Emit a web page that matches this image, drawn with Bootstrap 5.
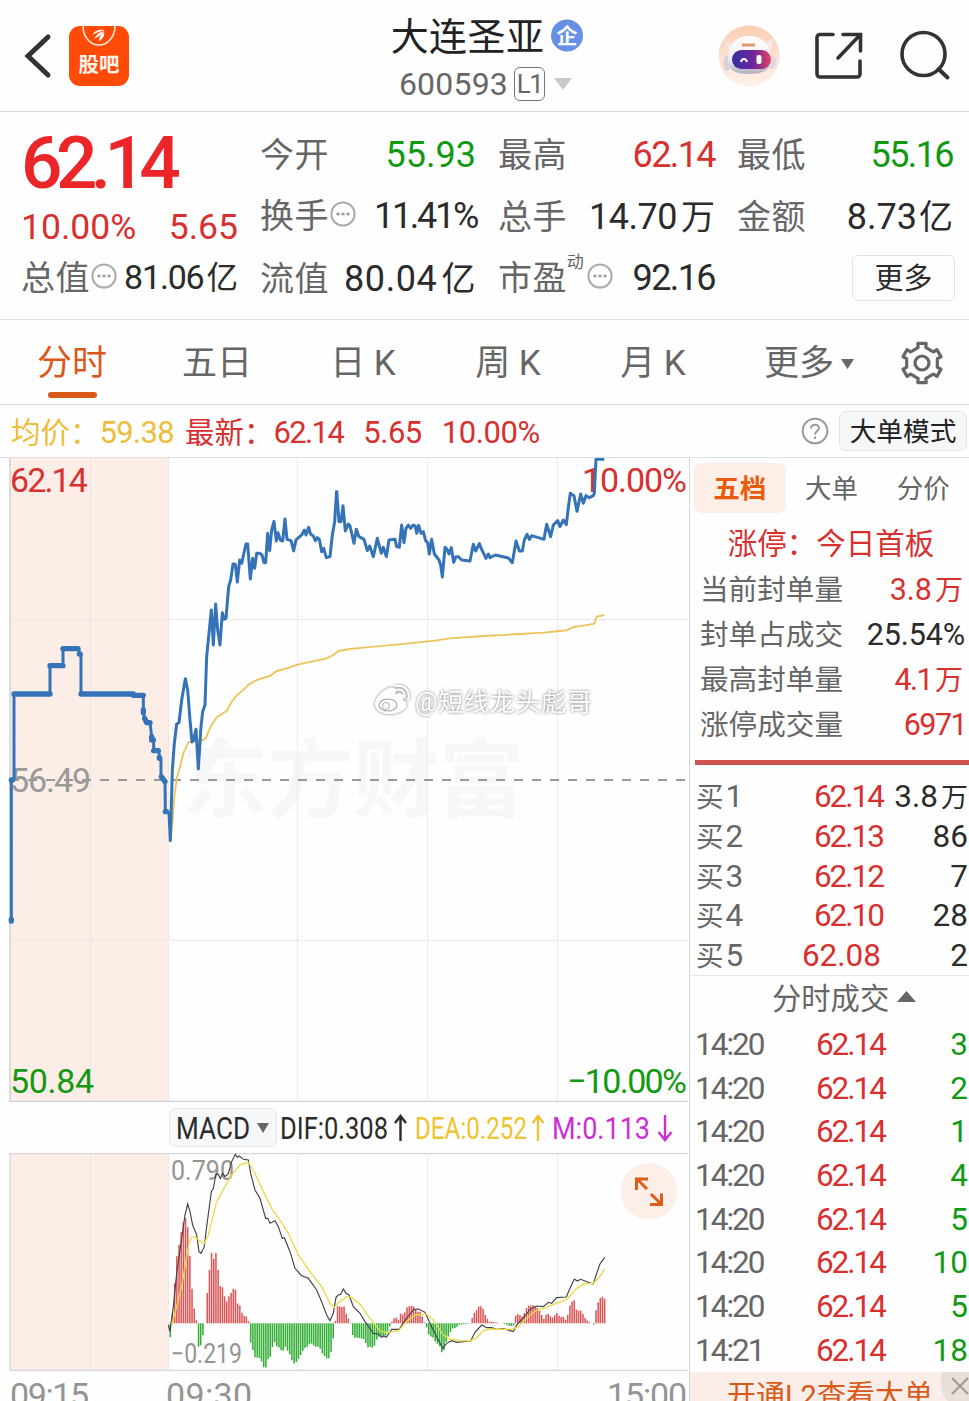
<!DOCTYPE html>
<html lang="zh-CN">
<head>
<meta charset="utf-8">
<meta name="viewport" content="width=device-width, initial-scale=1">
<title>大连圣亚 600593</title>
<link href="https://cdn.jsdelivr.net/npm/bootstrap@5.3.0/dist/css/bootstrap.min.css" rel="stylesheet">
<style>
:root{--up:#d7302f;--down:#119911;--ink:#2b2b2b;--dim:#666;--brand:#d9591a;--line:#dfe1e3}
body{font-family:Roboto,"Noto Sans CJK SC",sans-serif;color:var(--ink);background:#fefefe;width:969px;height:1401px;overflow:hidden;line-height:1}
.up{color:var(--up)}.down{color:var(--down)}.dim{color:var(--dim)}
svg{display:block;flex:none}
svg text{font-family:Roboto,"Noto Sans CJK SC",sans-serif}
.topbar{height:112px;border-bottom:1px solid #d9dbdd}
.side-l{width:365px;padding:1px 0 0 24px}
.side-r{width:365px;padding:1px 18px 0 0}
.name-col{padding-left:5px}
.stock-name{font-size:38px;line-height:44px;letter-spacing:.4px;font-weight:400;color:#222;margin-top:15px}
.stock-code{font-size:32px;line-height:36px;margin-top:7px;padding-right:2px}
.stock-code .num{letter-spacing:.2px}
.lvl{width:31px;height:34px;border:1.5px solid #777;border-radius:6px;font-size:26px;line-height:32px;letter-spacing:-1.5px}
.quote{height:208px;border-bottom:1px solid var(--line);padding:11px 0 0 21px}
.q-grid{display:grid;grid-template-columns:217px 216px 217px 216px;column-gap:22px}
.q-grid>div{height:62px;line-height:64px;font-size:36px;white-space:nowrap}
.q-grid .lb{font-size:34px;color:var(--dim);letter-spacing:.4px}
.q-grid .lb svg{transform:translate(1px,-2px)}
.q-main{grid-row:span 2;height:124px!important}
.q-price{font-size:73px;font-weight:500;line-height:81px;letter-spacing:-6.6px;color:#eb2528}
.q-sub{line-height:46px;font-size:35.5px}
.tn{letter-spacing:-1.6px}
.wan{font-size:34px;margin-left:4px}
.more-btn{width:103px;height:46px;border:1.5px solid #e2e2e2;border-radius:6px;font-size:29px;line-height:46px;margin-right:-2px}
.tabs-row{height:85px;border-bottom:1px solid #d9dbdd;font-size:35px;color:var(--dim);display:grid;grid-template-columns:144px 146px 146px 144px 146px 146px 97px;line-height:88px}
.tabs-row .on{color:var(--brand);position:relative}
.tabs-row .on::after{content:"";position:absolute;left:48px;width:49px;height:6px;top:72px;border-radius:3px;background:var(--brand)}
.info-row{height:53px;border-bottom:1px solid var(--line);font-size:31px;line-height:54px;padding:0 2px 0 11px;white-space:nowrap}
.info-row>.t{padding-top:4px}
.mode-btn{width:128px;height:40px;background:#f6f7f9;border:1.5px solid #e2e4e7;border-radius:7px;font-size:26.7px;line-height:40px;color:#222}
.chart-col{width:689px}
.side-col{width:280px;border-left:1px solid #d4d7da}
.macd-row{height:51px;padding-left:169px;white-space:nowrap}
.macd-btn{width:108px;height:39px;background:#f6f7f9;border:1.5px solid #e4e6e9;border-radius:7px}
.axis{height:31px;padding-left:10px;overflow:hidden}
.book-tabs{height:55px;padding:5px 0 0 4px;font-size:26.5px;color:var(--dim)}
.book-tabs div{width:92px;height:50px;line-height:52px;text-align:center;border-radius:8px}
.book-tabs .on{background:#fdeee7;color:#ea5a0c;font-weight:700}
.limit{height:53px;line-height:62px;font-size:29.5px;text-align:center;padding-left:3px}
.stat{height:45px;line-height:48px;font-size:30.5px;padding:0 6px 0 10px}
.stat .k{font-size:28.6px;color:var(--dim)}
.stat .wan{font-size:28px;margin-left:3px}
.bar{height:5px;background:#cf5251;margin:14px 0 11px 5px}
.bid,.deal{display:grid;grid-template-columns:84px 101px 1fr;font-size:31.5px;padding:0 1px 0 6px}
.bid{height:39.8px;line-height:42px}
.bid>span:nth-child(2),.deal>span:nth-child(2),.bid>span:nth-child(3),.deal>span:nth-child(3){text-align:right}
.bid .wan{font-size:27px;margin-left:3px}
.cn{font-size:27.5px;margin-right:2px}
.bid .tn,.deal .tn{letter-spacing:-2px;margin-right:-2px}
.deal{height:43.7px;line-height:43.7px;grid-template-columns:84px 104px 1fr;padding-left:5px}
.deal-h{height:48px;border-top:1px solid #e6e8ea;font-size:29.3px;line-height:46px;padding-left:82px}
.promo{height:31px;background:#fbeee8;color:var(--brand);font-size:29px;line-height:48px;padding-left:37px;overflow:hidden;white-space:nowrap;position:relative}
.promo svg{position:absolute;right:0;top:0}
</style>
</head>
<body>
<header class="topbar d-flex justify-content-between">
  <div class="side-l d-flex align-items-center">
    <svg width="28" height="48" viewBox="0 0 28 48"><path d="M24 5 4 24 24 43" fill="none" stroke="#333" stroke-width="5" stroke-linecap="round"/></svg>
    <svg width="60" height="60" viewBox="0 0 60 60" class="me-auto" style="margin-left:17px"><rect width="60" height="60" rx="11" fill="#ff4a08"/><path d="M14 0a16 19 0 0 0 32 0" fill="none" stroke="#ffe4d8" stroke-width="1.600"/><path d="M23 9c3-5 8-6 13-5-5 1-9 3-13 5Zm2 4c3-5 6-7 10-8-3 4-6 6-10 8Zm5 2c0-4 2-7 5-9 1 3-1 7-5 9Z" fill="#fff"/><text x="9.500" y="46" font-size="20.500" font-weight="700" fill="#fff4ee" textLength="41">股吧</text></svg>
  </div>
  <div class="text-center name-col">
    <div class="d-flex align-items-center justify-content-center stock-name"><span>大连圣亚</span>
      <svg width="33" height="33" viewBox="0 0 33 33" style="margin:-3px 0 0 6px"><circle cx="17" cy="16.500" r="16" fill="#6690e6"/><text x="6.500" y="24" font-size="21" font-weight="700" fill="#fff">企</text></svg></div>
    <div class="d-flex align-items-center justify-content-center stock-code dim"><span class="num">600593</span><span class="lvl" style="margin-left:6px">L1</span>
      <svg width="20" height="12" viewBox="0 0 20 12" class="ms-2"><path d="M1 0h18L10 12Z" fill="#c9c9c9"/></svg></div>
  </div>
  <div class="side-r d-flex align-items-center justify-content-end">
    <svg width="62" height="62" viewBox="0 0 62 62"><defs><linearGradient id="bg" x2="0" y2="1"><stop stop-color="#fccdb3"/><stop offset="1" stop-color="#fff2eb"/></linearGradient><linearGradient id="visor"><stop stop-color="#3630a0"/><stop offset=".55" stop-color="#6d259b"/><stop offset="1" stop-color="#e64261"/></linearGradient><linearGradient id="shell" x2="0" y2="1"><stop stop-color="#fff"/><stop offset=".6" stop-color="#f1eef2"/><stop offset="1" stop-color="#aeb0c0"/></linearGradient></defs><circle cx="31" cy="31" r="30.500" fill="url(#bg)"/><path d="m6 16 9 4-1 8Zm50-3-10 6 5 8Z" fill="#eeeaf0"/><ellipse cx="9" cy="38" rx="3.500" ry="8" fill="#d5d2dc"/><ellipse cx="54" cy="37" rx="4" ry="7" fill="#ddd9e2"/><path d="M10 36c0-17 8-25 21-25s22 8 22 25c0 9-8 13-22 13S10 45 10 36Z" fill="url(#shell)"/><path d="M24 20h13" stroke="#dd9a67" stroke-width="3"/><rect x="14" y="25" width="39" height="19" rx="9.500" fill="url(#visor)"/><path d="M23 37c1-4 5-4 6 0" fill="none" stroke="#fff" stroke-width="2"/><rect x="38.500" y="30" width="5" height="9" rx="2" fill="#fff"/></svg>
    <svg width="50" height="50" viewBox="0 0 50 50" style="margin-left:34px"><path d="M19 3.500H6a3 3 0 0 0-3 3V43a3 3 0 0 0 3 3h37a3 3 0 0 0 3-3V30M29 3.500h17.500V20M45.500 4.500 24 27" fill="none" stroke="#333" stroke-width="3.600" stroke-linecap="round"/></svg>
    <svg width="52" height="52" viewBox="0 0 52 52" style="margin-left:35px"><circle cx="24.500" cy="24" r="21.500" fill="none" stroke="#333" stroke-width="3.600"/><path d="m39.500 39 9 8.500" stroke="#333" stroke-width="4" stroke-linecap="round"/></svg>
  </div>
</header>

<section class="quote">
  <div class="q-grid">
    <div class="q-main"><div class="q-price">62.14</div><div class="d-flex justify-content-between up q-sub"><span>10.00%</span><span>5.65</span></div></div>
    <div class="d-flex justify-content-between"><span class="lb">今开</span><span class="down">55.93</span></div>
    <div class="d-flex justify-content-between"><span class="lb">最高</span><span class="up tn">62.14</span></div>
    <div class="d-flex justify-content-between"><span class="lb">最低</span><span class="down tn">55.16</span></div>
    <div class="d-flex align-items-center justify-content-between"><span class="lb d-flex align-items-center">换手<svg width="26" height="26" viewBox="0 0 26 26"><circle cx="13" cy="13" r="11.600" fill="none" stroke="#aaa" stroke-width="2"/><path d="M6.500 13h3m2 0h3m2 0h3" stroke="#999" stroke-width="2.500"/></svg></span><span style="letter-spacing:-2.300px;margin-right:-1px">11.41%</span></div>
    <div class="d-flex justify-content-between"><span class="lb">总手</span><span><span style="letter-spacing:-.5px">14.70</span><span class="wan">万</span></span></div>
    <div class="d-flex justify-content-between"><span class="lb">金额</span><span>8.73<span class="wan" style="margin-left:2px">亿</span></span></div>
    <div class="d-flex align-items-center justify-content-between"><span class="lb d-flex align-items-center">总值<svg width="26" height="26" viewBox="0 0 26 26"><circle cx="13" cy="13" r="11.600" fill="none" stroke="#aaa" stroke-width="2"/><path d="M6.500 13h3m2 0h3m2 0h3" stroke="#999" stroke-width="2.500"/></svg></span><span style="font-size:34px"><span style="letter-spacing:-1.200px">81.06</span><span style="font-size:31.500px;margin-left:3px">亿</span></span></div>
    <div class="d-flex justify-content-between"><span class="lb">流值</span><span style="letter-spacing:.6px">80.04<span class="wan">亿</span></span></div>
    <div class="d-flex align-items-center justify-content-between"><span class="lb d-flex align-items-center">市盈<small style="font-size:17px;line-height:32px;align-self:start">动</small><svg width="26" height="26" viewBox="0 0 26 26" style="margin-left:2px"><circle cx="13" cy="13" r="11.600" fill="none" stroke="#aaa" stroke-width="2"/><path d="M6.500 13h3m2 0h3m2 0h3" stroke="#999" stroke-width="2.500"/></svg></span><span class="tn">92.16</span></div>
    <div class="d-flex align-items-center justify-content-end"><span class="more-btn text-center">更多</span></div>
  </div>
</section>

<nav class="tabs-row text-center">
  <div class="on">分时</div><div>五日</div><div>日 K</div><div>周 K</div><div>月 K</div>
  <div class="d-flex align-items-center justify-content-end" style="padding-right:17px">更多<svg width="14" height="11" viewBox="0 0 14 11" style="margin-left:7px"><path d="M0 0h13L6.500 10Z" fill="#666"/></svg></div>
  <div class="d-flex align-items-center justify-content-end" style="padding-right:24px"><svg width="46" height="46" viewBox="-23 -23 46 46" style="margin-top:-2px"><path id="gear" fill="none" stroke="#666" stroke-width="3.200" stroke-linejoin="round"/><circle r="7" fill="none" stroke="#666" stroke-width="3.200"/></svg></div>
</nav>

<div class="info-row d-flex align-items-center">
  <span class="t" style="color:#edbd3c"><span style="font-size:29.500px">均价：</span><span style="letter-spacing:-.7px">59.38</span></span>
  <span class="up t" style="margin-left:11px"><span style="font-size:29.500px">最新：</span><span class="tn">62.14</span></span>
  <span class="up t" style="margin-left:20px;letter-spacing:-.5px">5.65</span><span class="up t" style="margin-left:20px;letter-spacing:-.4px">10.00%</span>
  <svg class="ms-auto" style="margin-right:10px" width="28" height="28" viewBox="0 0 28 28"><circle cx="14" cy="14" r="12.300" fill="none" stroke="#999" stroke-width="2"/><path d="M10 11.500c0-5 8-5 8-.5 0 3-4 3-4 6.500m0 2v2.500" fill="none" stroke="#999" stroke-width="2"/></svg>
  <span class="mode-btn text-center">大单模式</span>
</div>

<main class="d-flex">
  <div class="chart-col">
    <svg width="689" height="644" viewBox="0 458 689 644">
      <rect x="10" y="458" width="158.500" height="644" fill="#fdede7"/>
      <text y="811" x="182" font-size="86" font-weight="700" fill="#f7f7f7" textLength="342">东方财富</text>
      <path d="M90.500 458v644M168.500 458v644M297.500 458v644M427.500 458v644M557.500 458v644M10 619.500h678M10 940.500h678" stroke="#dcdcdc" stroke-dasharray="1 1"/>
      <path d="M10 458v644M10 1101.500h678" stroke="#cfd4d8" stroke-width="1.500" fill="none"/>
      <path d="M10 780h678" stroke="#999" stroke-width="1.800" stroke-dasharray="9 9"/>
      <g font-size="34">
        <text x="10" y="492" fill="#d7302f" letter-spacing="-1.900">62.14</text>
        <text x="10" y="792" fill="#999" textLength="81">56.49</text>
        <text x="10" y="1093" fill="#119911" textLength="84">50.84</text>
        <text x="582" y="492" fill="#d7302f" textLength="105">10.00%</text>
        <text x="567" y="1093" fill="#119911" textLength="120">−10.00%</text>
      </g>
      <g transform="translate(0 450) scale(.33333)" fill="none" stroke-linejoin="round">
        <path stroke="#ecc45c" stroke-width="5.500" d="M511 1172 518 1110 522 1050 530 985 540 950 550 910 565 877 576 873 610 870 618 862 632 830 650 802 665 793 680 783 695 755 710 737 727 722 750 701 775 688 810 678 830 663 860 655 895 643 935 635 980 625 1000 615 1015 603 1050 597 1090 593 1190 584 1305 572 1350 565 1450 558 1560 552 1630 548 1680 543 1700 541 1720 531 1750 527 1783 521 1790 500 1813 495"/>
        <path stroke="#3573b9" stroke-width="9" d="M34 1413V990H42V732H150V647H189V596H236L238 612H243V732H400L430 737V780L433 805 440 818H450L455 860 461 870V902H475L480 923H483V980L495 995 496 1085 507 1088 511 1172 517 960 523 880 530 822 537 818 545 750 556 686 563 720 570 810 576 876 580 872 588 838 595 957 603 830 608 785 615 765 620 620 634 480 640 585 647 462 653 540 660 585 667 488 672 508 678 505 686 410 692 390 699 342 706 343 712 396 719 330 725 340 738 282 743 282 751 387 758 325 764 355 770 310 780 310 786 315 792 338 797 338 803 250 809 302 815 240 822 214 829 273 834 248 841 270 848 273 855 207 861 268 873 272 881 303 888 270 905 255 913 240 918 255 926 232 932 253 940 258 946 272 952 263 958 268 965 305 971 295 979 323 990 320 997 255 1004 215 1010 122"/>
        <path stroke="#3573b9" stroke-width="16" stroke-linecap="round" d="M34 1413V1408M34 990H37M42 732H150M150 647H189M189 596H234M238 612H240M243 732H400M400 736H430M430 780V788M434 805 440 818H450M455 860V870H460M461 902H475M478 922V925M484 980 495 995M496 1085H500"/>
        <path stroke="#3573b9" stroke-width="9" transform="translate(1020)" d="M-10 122-3 215 3 215 9 167 16 243 25 222 30 228 42 280 49 238 57 260 72 268 82 302 89 288 100 320 112 265 124 310 130 292 139 320 147 270 165 268 170 290 178 292 185 225 192 278 198 235 205 225 212 235 220 225 226 228 230 250 236 226 243 250 250 245 257 272 263 278 268 312 275 268 283 312 297 330 302 345 307 381 315 292 321 298 327 312 334 293 341 337 348 320 355 320 365 330 390 333 400 283 407 303 418 281 425 298 438 325 445 312 450 323 466 315 505 324 517 338 528 273 538 303 547 303 553 270 561 253 568 268 575 257 612 268 620 223 632 260 640 225 653 212 660 230 670 210 679 224 686 165 691 130 702 137 711 184 722 132 730 160 738 137 748 143 760 137 763 130 768 28 793 28"/>
      </g>
      <g style="filter:drop-shadow(0 0 1.500px #777)" fill="#fff">
        <text x="415" y="711" font-size="25" textLength="177">@短线龙头彪哥</text>
        <path d="M375 704c0-8 13-19 19-16 3 1 2 5 1 6 8-2 10 1 8 6 5 2 5 8-1 11-10 6-27 3-27-7Z"/>
        <path d="M395 690c7-2 11 3 9 8M395 686c10-2 16 6 13 14" fill="none" stroke="#fff" stroke-width="2"/>
      </g>
      <ellipse cx="388" cy="705" rx="9" ry="6" fill="none" stroke="#aaa" stroke-width="1.200"/><circle cx="386" cy="706" r="3.500" fill="none" stroke="#aaa"/>
    </svg>
    <div class="macd-row d-flex align-items-center">
      <span class="macd-btn d-flex align-items-center"><svg width="105" height="37" viewBox="0 0 105 37"><text x="6" y="30" font-size="32" fill="#2b2b2b" textLength="74" lengthAdjust="spacingAndGlyphs">MACD</text><path d="M87 14h12l-6 10Z" fill="#666"/></svg></span>
      <svg width="410" height="50" viewBox="277 1103 410 50" font-size="32"><text x="280" y="1139" fill="#2b2b2b" textLength="108" lengthAdjust="spacingAndGlyphs">DIF:0.308</text><text x="415" y="1139" fill="#edc433" textLength="112" lengthAdjust="spacingAndGlyphs">DEA:0.252</text><text x="552" y="1139" fill="#cb30d3" textLength="98" lengthAdjust="spacingAndGlyphs">M:0.113</text><g fill="none" stroke-width="2.400"><path stroke="#2b2b2b" d="M400.500 1141v-25m-5.500 7 5.500-7 5.500 7"/><path stroke="#edc433" d="M538 1141v-25m-5.500 7 5.500-7 5.500 7"/><path stroke="#cb30d3" d="M665 1115v25m-6.500-8 6.500 8 6.500-8"/></g></svg>
    </div>
    <svg width="689" height="218" viewBox="0 1153 689 218">
      <rect x="10" y="1153" width="158.500" height="217" fill="#fdede7"/>
      <path d="M90.500 1153v217M168.500 1153v217M297.500 1153v217M427.500 1153v217M557.500 1153v217" stroke="#dcdcdc" stroke-dasharray="1 1"/>
      <path d="M688 1153.500H10V1370.500H688" fill="none" stroke="#d4d8dc" stroke-width="1.300"/>
      <text x="171" y="1180" font-size="27" fill="#949494" textLength="63" lengthAdjust="spacingAndGlyphs">0.790</text>
      <text x="171" y="1363" font-size="27" fill="#949494" textLength="71" lengthAdjust="spacingAndGlyphs">−0.219</text>
      <g transform="translate(0 1060) scale(.33333)" fill="none">
        <path id="pos" stroke="#dc5556" stroke-width="4.600"/><path id="neg" stroke="#32ae35" stroke-width="4.600"/>
        <path stroke="#424242" stroke-width="3.400" d="M505 795 510 815 520 740 530 640 555 465 563 432 570 455 578 495 590 525 597 575 603 580 613 560 620 500 634 395 640 385 648 342 655 343 661 355 668 340 675 350 685 340 695 305 706 283 712 292 718 288 730 298 745 300 752 340 765 390 780 415 797 475 803 475 810 490 825 482 835 500 847 535 853 533 870 575 885 625 905 647 925 655 950 690 965 725 980 765 990 782 1000 760 1008 712 1015 705 1022 703 1030 687 1038 700 1047 705 1060 740 1080 760 1095 785 1120 820 1135 822 1145 832 1152 828 1159 832 1175 808 1198 808 1210 788 1225 768 1242 748 1255 747 1275 757 1290 790 1310 830 1328 865 1340 850 1355 842 1370 847 1412 843 1425 817 1445 795 1460 803 1475 803 1490 808 1510 806 1540 815 1550 795 1575 768 1590 748 1610 738 1630 740 1645 727 1655 730 1670 713 1699 711 1710 685 1723 657 1732 663 1742 658 1755 663 1780 672 1790 640 1800 612 1814 592"/>
        <path stroke="#eada48" stroke-width="4" d="M515 795 530 740 545 680 555 620 567 550 575 532 585 530 595 540 612 552 625 525 650 425 675 380 695 345 720 315 745 307 760 330 790 395 815 445 840 480 865 520 895 585 930 635 965 680 990 730 1003 742 1015 728 1040 710 1055 712 1080 733 1110 775 1140 812 1160 818 1195 813 1220 785 1245 765 1265 763 1280 763 1300 780 1330 825 1350 837 1380 842 1410 843 1430 833 1450 812 1470 807 1535 808 1555 800 1580 775 1610 750 1630 745 1700 718 1730 685 1755 670 1780 670 1795 655 1814 627"/>
      </g>
      <circle cx="649" cy="1191.300" r="28.300" fill="#fdefe8"/>
      <path d="M636.500 1190v-11h11.500M637 1179l10 10M661.500 1193.500v11h-11.500M661 1204l-10-10" fill="none" stroke="#dc5c18" stroke-width="3"/>
    </svg>
    <div class="axis"><svg width="677" height="30" viewBox="10 1371 677 30" font-size="34" fill="#949494"><text x="10" y="1407" textLength="79">09:15</text><text x="166" y="1407" textLength="86">09:30</text><text x="607" y="1407" textLength="80">15:00</text></svg></div>
  </div>

  <aside class="side-col">
    <div class="book-tabs d-flex"><div class="on">五档</div><div>大单</div><div>分价</div></div>
    <div class="limit up">涨停：今日首板</div>
    <div class="stat d-flex justify-content-between"><span class="k">当前封单量</span><span class="up">3.8<span class="wan">万</span></span></div>
    <div class="stat d-flex justify-content-between"><span class="k">封单占成交</span><span style="margin-right:-2px;letter-spacing:-.1px">25.54%</span></div>
    <div class="stat d-flex justify-content-between"><span class="k">最高封单量</span><span class="up"><span class="tn">4.1</span><span class="wan">万</span></span></div>
    <div class="stat d-flex justify-content-between"><span class="k">涨停成交量</span><span class="up tn" style="margin-right:-3px">6971</span></div>
    <div class="bar"></div>
    <div id="bids"></div>
    <div class="deal-h dim d-flex align-items-center">分时成交<svg width="19" height="12" viewBox="0 0 19 12" class="ms-2" style="margin-top:-4px"><path d="M0 11 9.500 0 19 11Z" fill="#666"/></svg></div>
    <div id="deals"></div>
    <div class="promo">开通L2查看大单<svg width="28" height="31" viewBox="0 0 28 31"><path d="M0 0h28v31H10C3 27 0 20 0 12Z" fill="#e8dfdb"/><path d="m11 6 16 16m0-16L11 22" stroke="#a19a97" stroke-width="2.200"/></svg></div>
  </aside>
</main>

<script src="https://cdn.jsdelivr.net/npm/bootstrap@5.3.0/dist/js/bootstrap.bundle.min.js"></script>
<script>
// order book and recent trades; prices with a 1 are set tighter
const tight=p=>p.includes('1')?`<span class="tn">${p}</span>`:p;
const bids=[['1','62.14','3.8万'],['2','62.13','86'],['3','62.12','7'],['4','62.10','28'],['5','62.08','2']];
document.getElementById('bids').innerHTML=bids.map(([n,p,v])=>
  `<div class="bid"><span class="dim"><span class="cn">买</span>${n}</span><span class="up">${tight(p)}</span><span>${v.replace('万','<span class="wan">万</span>')}</span></div>`).join('');
const deals=[['14:20',3],['14:20',2],['14:20',1],['14:20',4],['14:20',5],['14:20',10],['14:20',5],['14:21',18]];
document.getElementById('deals').innerHTML=deals.map(([t,v])=>
  `<div class="deal"><span class="dim">${tight(t)}</span><span class="up">${tight('62.14')}</span><span class="down">${v}</span></div>`).join('');

// MACD histogram: sampled envelope, one bar per minute
const env=[505,-5,511,-42,516,-5,520,90,524,120,530,198,537,235,543,270,549,300,556,318,563,290,569,213,575,115,582,48,589,12,594,-70,601,-72,607,-42,614,-18,620,72,627,148,634,215,640,188,647,217,653,172,660,112,667,110,673,85,679,62,686,80,692,88,699,104,706,104,712,60,719,55,725,33,732,22,738,22,745,12,751,-54,758,-78,764,-102,777,-103,783,-110,790,-130,796,-140,803,-108,809,-108,815,-80,822,-52,829,-68,841,-75,848,-90,854,-65,861,-80,868,-90,880,-122,890,-115,900,-100,912,-75,920,-72,932,-58,945,-70,958,-70,965,-88,980,-105,990,-105,997,-62,1004,-18,1010,52,1020,50,1024,45,1030,60,1036,35,1043,18,1049,8,1053,-5,1060,-45,1070,-42,1095,-48,1100,-72,1115,-70,1120,-78,1128,-52,1135,-40,1155,-38,1165,-20,1172,-2,1178,10,1186,20,1198,8,1203,38,1210,22,1222,50,1237,53,1243,50,1250,35,1260,35,1270,12,1276,-5,1283,-18,1289,-45,1296,-35,1302,-50,1320,-70,1328,-95,1340,-50,1350,-28,1360,-12,1367,-15,1374,-5,1400,-2,1414,0,1418,25,1430,40,1437,52,1447,50,1457,22,1467,5,1477,5,1497,1,1515,-2,1530,-8,1540,-8,1546,22,1555,28,1567,20,1575,35,1582,52,1600,54,1610,50,1620,35,1632,12,1640,30,1647,28,1655,15,1672,32,1680,18,1690,20,1697,10,1705,30,1710,55,1718,68,1724,70,1730,38,1745,38,1752,20,1765,5,1783,-4,1788,40,1795,65,1803,80,1808,80,1816,72];
let up='',dn='',k=0;
for(let i=0;i<=200;i++){
  const x=511+i*6.515;
  while(k+3<env.length-2&&env[k+2]<x)k+=2;
  const t=(x-env[k])/(env[k+2]-env[k]),h=env[k+1]+t*(env[k+3]-env[k+1]);
  const s=`M${x.toFixed(1)} 790v${(-h).toFixed(1)}`;
  h>0?up+=s:dn+=s;
}
document.getElementById('pos').setAttribute('d',up);
document.getElementById('neg').setAttribute('d',dn);

// settings gear: six flat teeth around an outer ring
const g=[];
for(let i=0;i<6;i++)for(const [a,r] of [[-22,15.500],[-14,16],[-12,20],[12,20],[14,16],[22,15.500]]){
  const q=(i*60-90+a)*Math.PI/180;g.push((r*Math.cos(q)).toFixed(1)+' '+(r*Math.sin(q)).toFixed(1));
}
document.getElementById('gear').setAttribute('d','M'+g.join('L')+'Z');
</script>
</body>
</html>
